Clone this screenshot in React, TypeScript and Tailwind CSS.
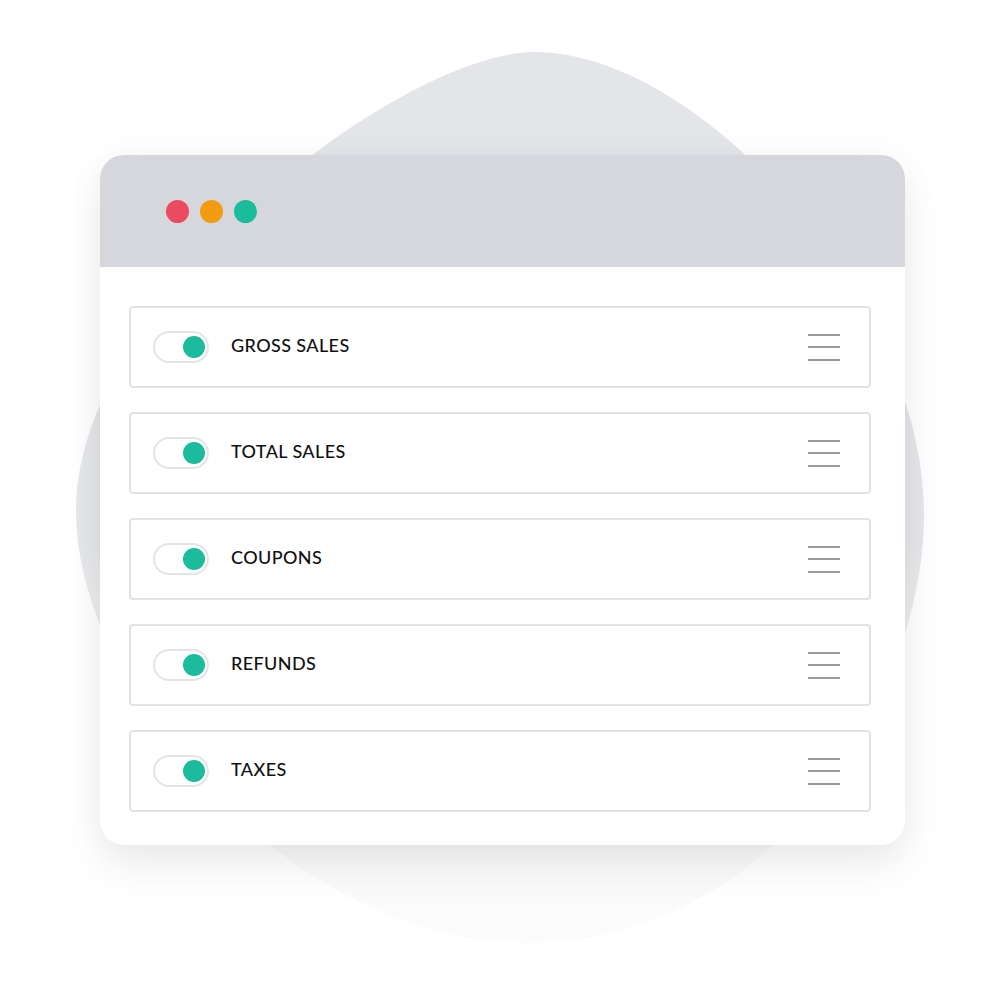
import React from "react";

const rows = ["GROSS SALES", "TOTAL SALES", "COUPONS", "REFUNDS", "TAXES"];

function Toggle() {
  return (
    <div className="flex h-[32px] w-[56px] items-center justify-end rounded-full border-2 border-[#e4e4e4] bg-white pr-[2px]">
      <div className="h-[22px] w-[22px] rounded-full bg-[#1abc9c]" />
    </div>
  );
}

function Handle() {
  return (
    <div className="flex w-[32px] flex-col gap-[10.5px]">
      <div className="h-[2px] bg-[#9a9a9a]" />
      <div className="h-[2px] bg-[#9a9a9a]" />
      <div className="h-[2px] bg-[#9a9a9a]" />
    </div>
  );
}

export default function App() {
  return (
    <div className="relative h-[1000px] w-[1000px] overflow-hidden bg-white" style={{ fontFamily: "Lato, 'Noto Sans', sans-serif" }}>
      <svg className="absolute left-0 top-0" width="1000" height="1000" viewBox="0 0 1000 1000">
        <defs>
          <linearGradient id="blobg" x1="0" y1="52" x2="0" y2="945" gradientUnits="userSpaceOnUse">
            <stop offset="0" stopColor="#e4e5e9" />
            <stop offset="0.55" stopColor="#e6e7ea" />
            <stop offset="0.68" stopColor="#f1f1f3" />
            <stop offset="0.85" stopColor="#f8f8f8" />
            <stop offset="1" stopColor="#fcfcfc" />
          </linearGradient>
        </defs>
        <path
          d="M535 52 C700 52 924 300 924 515 C924 690 780 943 525 943 C300 943 76 700 76 510 C76 300 400 52 535 52 Z"
          fill="url(#blobg)"
        />
      </svg>
      <div className="absolute left-[100px] top-[155px] flex h-[690px] w-[805px] flex-col overflow-hidden rounded-[24px] bg-white shadow-[0_22px_40px_rgba(0,0,0,0.07),0_0_40px_rgba(0,0,0,0.035)]">
        <div className="flex h-[112px] shrink-0 items-center gap-[11px] bg-[#d6d7dc] pl-[66px]">
          <div className="h-[23px] w-[23px] rounded-full bg-[#eb4a61]" />
          <div className="h-[23px] w-[23px] rounded-full bg-[#f39c12]" />
          <div className="h-[23px] w-[23px] rounded-full bg-[#1abc9c]" />
        </div>
        <div className="flex flex-col gap-[24px] pl-[29px] pr-[34px] pt-[39px]">
          {rows.map((r) => (
            <div key={r} className="flex h-[82px] items-center rounded-[4px] border-2 border-[#e2e2e2] pl-[22px] pr-[29px]">
              <Toggle />
              <div className="mb-[4px] ml-[22px] flex-1 text-[18px] font-medium tracking-[0.4px] text-[#111]">{r}</div>
              <Handle />
            </div>
          ))}
        </div>
      </div>
    </div>
  );
}
